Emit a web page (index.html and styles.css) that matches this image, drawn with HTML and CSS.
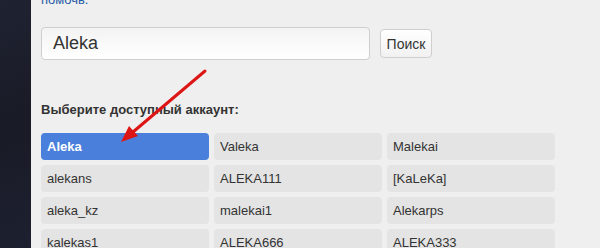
FILE: index.html
```html
<!DOCTYPE html>
<html lang="ru">
<head>
    <meta charset="UTF-8">
    <title>Выбор аккаунта</title>
    <link rel="stylesheet" href="styles.css">
</head>
<body>
<div class="page">
    <div class="side"></div>
    <div class="main">
        <p class="intro"><a href="#">помочь.</a></p>
        <form class="search">
            <input type="text" class="query" value="Aleka">
            <button type="button" class="go">Поиск</button>
        </form>
        <h4 class="title">Выберите доступный аккаунт:</h4>
        <div class="accounts">
            <div class="acc active">Aleka</div>
            <div class="acc">Valeka</div>
            <div class="acc">Malekai</div>
            <div class="acc">alekans</div>
            <div class="acc">ALEKA111</div>
            <div class="acc">[KaLeKa]</div>
            <div class="acc">aleka_kz</div>
            <div class="acc">malekai1</div>
            <div class="acc">Alekarps</div>
            <div class="acc">kalekas1</div>
            <div class="acc">ALEKA666</div>
            <div class="acc">ALEKA333</div>
        </div>
        <svg class="arrow" width="100" height="80" viewBox="0 0 100 80">
            <line x1="92" y1="3" x2="20" y2="64" stroke="#dd1515" stroke-width="3" stroke-linecap="round"/>
            <polygon points="8,74 16,58 25,68" fill="#dd1515"/>
        </svg>
    </div>
</div>
</body>
</html>
```

FILE: styles.css
```css
html, body { margin: 0; padding: 0; height: 100%; overflow: hidden; }
body { background-color: #efefef; font-family: "Liberation Sans", Arial, sans-serif; color: #333333; }
.page { display: flex; height: 100%; }
.side { width: 31px; flex-shrink: 0; background: linear-gradient(160deg, #1f2231 0%, #191b26 50%, #1d2030 100%); }
.main { position: relative; flex: 1; padding-left: 10px; }
.intro { margin: -9px 0 0 0; font-size: 13px; line-height: 18px; }
.intro a { color: #1f5aa6; text-decoration: none; }
.search { display: flex; align-items: center; margin-top: 18px; }
.query { box-sizing: border-box; width: 329px; height: 33px; padding: 0 11px; font-size: 18px; font-family: "Liberation Sans", Arial, sans-serif; color: #333333; border: 1px solid #cfcfcf; border-radius: 4px; background: linear-gradient(#f3f3f3, #ffffff); outline: none; }
.go { box-sizing: border-box; margin-left: 10px; width: 52px; height: 29px; padding: 0; font-size: 14px; font-family: "Liberation Sans", Arial, sans-serif; color: #333333; border: 1px solid #cfcfcf; border-radius: 4px; background: linear-gradient(#ffffff, #f1f1f1); }
.title { margin: 42px 0 0 0; font-size: 13px; line-height: 15px; font-weight: bold; color: #333333; }
.accounts { display: grid; grid-template-columns: repeat(3, 168px); grid-auto-rows: 27px; column-gap: 5px; row-gap: 5px; margin-top: 16px; }
.acc { display: flex; align-items: center; padding-left: 6px; font-size: 13px; background-color: #e4e4e4; border-radius: 4px; }
.acc.active { background-color: #4a7fdc; color: #ffffff; font-weight: bold; }
.arrow { position: absolute; left: 82px; top: 68px; }
```
